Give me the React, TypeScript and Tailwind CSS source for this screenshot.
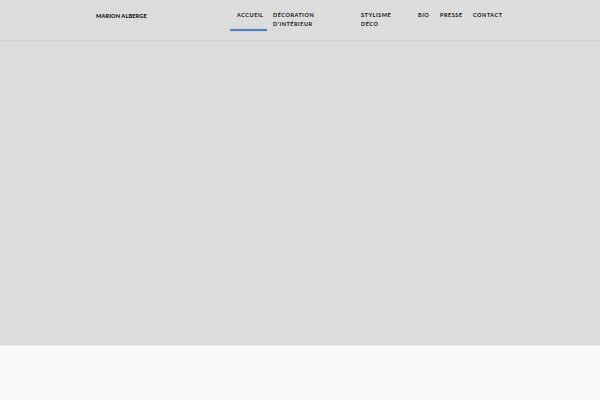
import React from 'react';

const font = { fontFamily: 'Lato, "Liberation Sans", sans-serif' };

export default function App() {
  return (
    <div className="w-[600px] h-[400px] flex flex-col bg-[#dcdcdc] text-[#111111]" style={font}>
      {/* header */}
      <header className="h-[41px] shrink-0 flex items-start border-b border-[#d2d2d2]">
        <div className="pl-[96px] pt-[12px] w-[230px] text-[5.6px] font-black tracking-[0.02em] uppercase">
          Marion Alberge
        </div>
        <nav className="flex items-start text-[5.5px] font-bold tracking-[0.1em] uppercase leading-[9px]">
          <a className="relative w-[37px] h-[31px] pl-[7px] pt-[11px]">
            Accueil
            <span className="absolute left-0 right-0 bottom-0 h-[2px] bg-[#4d82c4] shadow-[0_0_2px_#9fc0e6]" />
          </a>
          <a className="w-[88px] pl-[6px] pt-[11px]">
            Décoration
            <br />
            D'intérieur
          </a>
          <a className="w-[56px] pl-[6px] pt-[11px]">
            Stylisme
            <br />
            Déco
          </a>
          <a className="w-[22px] pl-[7px] pt-[11px]">Bio</a>
          <a className="w-[33px] pl-[7px] pt-[11px]">Presse</a>
          <a className="pl-[7px] pt-[11px]">Contact</a>
        </nav>
      </header>
      {/* hero */}
      <main className="h-[304px] shrink-0 bg-[#dcdcdc]" />
      <section className="flex-1 bg-[#f8f8f8] border-t border-[#f0f0f0]" />
    </div>
  );
}
